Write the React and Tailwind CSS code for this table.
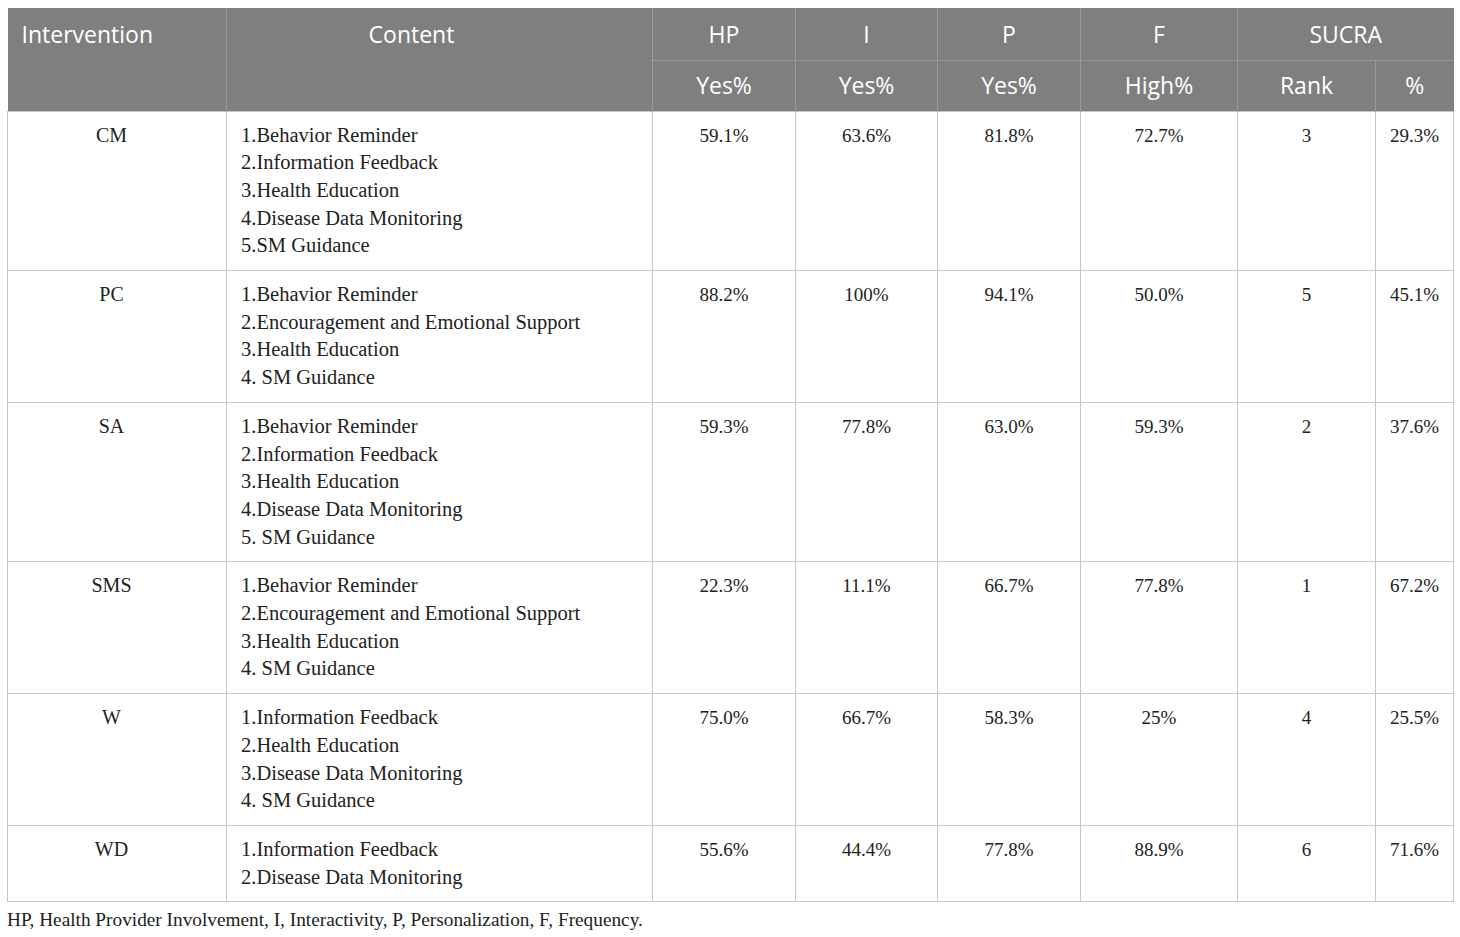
import React from 'react';

const rows = [
  { name: 'CM', items: ['1.Behavior Reminder', '2.Information Feedback', '3.Health Education', '4.Disease Data Monitoring', '5.SM Guidance'], vals: ['59.1%', '63.6%', '81.8%', '72.7%', '3', '29.3%'] },
  { name: 'PC', items: ['1.Behavior Reminder', '2.Encouragement and Emotional Support', '3.Health Education', '4. SM Guidance'], vals: ['88.2%', '100%', '94.1%', '50.0%', '5', '45.1%'] },
  { name: 'SA', items: ['1.Behavior Reminder', '2.Information Feedback', '3.Health Education', '4.Disease Data Monitoring', '5. SM Guidance'], vals: ['59.3%', '77.8%', '63.0%', '59.3%', '2', '37.6%'] },
  { name: 'SMS', items: ['1.Behavior Reminder', '2.Encouragement and Emotional Support', '3.Health Education', '4. SM Guidance'], vals: ['22.3%', '11.1%', '66.7%', '77.8%', '1', '67.2%'] },
  { name: 'W', items: ['1.Information Feedback', '2.Health Education', '3.Disease Data Monitoring', '4. SM Guidance'], vals: ['75.0%', '66.7%', '58.3%', '25%', '4', '25.5%'] },
  { name: 'WD', items: ['1.Information Feedback', '2.Disease Data Monitoring'], vals: ['55.6%', '44.4%', '77.8%', '88.9%', '6', '71.6%'] },
];

const head = "font-['Open_Sans',sans-serif] text-[23px] font-normal text-white";

export default function App() {
  return (
    <div className="bg-white w-[1460px] h-[937px] pt-[8px] px-[7px] font-['Liberation_Serif',serif] text-[#222]">
      <table className="table-fixed border-collapse w-[1446px]">
        <colgroup>
          <col className="w-[219px]" />
          <col className="w-[426px]" />
          <col className="w-[143px]" />
          <col className="w-[142px]" />
          <col className="w-[143px]" />
          <col className="w-[157px]" />
          <col className="w-[138px]" />
          <col className="w-[78px]" />
        </colgroup>
        <thead className="bg-[#7f7f7f]">
          <tr className="h-[52px]">
            <th rowSpan={2} className={`${head} text-left align-top pl-[14px] pt-[9px] border-r border-[#9a9a9a]`}>Intervention</th>
            <th rowSpan={2} className={`${head} text-center align-top pt-[9px] pr-[56px] border-r border-[#9a9a9a]`}>Content</th>
            <th className={`${head} border-r border-b border-[#9a9a9a]`}>HP</th>
            <th className={`${head} border-r border-b border-[#9a9a9a]`}>I</th>
            <th className={`${head} border-r border-b border-[#9a9a9a]`}>P</th>
            <th className={`${head} border-r border-b border-[#9a9a9a]`}>F</th>
            <th colSpan={2} className={`${head} border-b border-[#9a9a9a]`}>SUCRA</th>
          </tr>
          <tr className="h-[51px]">
            <th className={`${head} border-r border-[#9a9a9a]`}>Yes%</th>
            <th className={`${head} border-r border-[#9a9a9a]`}>Yes%</th>
            <th className={`${head} border-r border-[#9a9a9a]`}>Yes%</th>
            <th className={`${head} border-r border-[#9a9a9a]`}>High%</th>
            <th className={`${head} border-r border-[#9a9a9a]`}>Rank</th>
            <th className={head}>%</th>
          </tr>
        </thead>
        <tbody className="text-[19px] leading-[27.7px]">
          {rows.map((r) => (
            <tr key={r.name}>
              <td className="border border-[#c8c8c8] align-top text-center py-[10px] pr-[11px] text-[20px]">{r.name}</td>
              <td className="border border-[#c8c8c8] align-top py-[10px] pl-[14px] text-[20.5px]">
                {r.items.map((it) => (
                  <div key={it}>{it}</div>
                ))}
              </td>
              {r.vals.map((v, i) => (
                <td key={i} className="border border-[#c8c8c8] align-top text-center py-[10px]">{v}</td>
              ))}
            </tr>
          ))}
        </tbody>
      </table>
      <p className="mt-[6px] text-[19.3px] leading-[24px]">HP, Health Provider Involvement, I, Interactivity, P, Personalization, F, Frequency.</p>
    </div>
  );
}
